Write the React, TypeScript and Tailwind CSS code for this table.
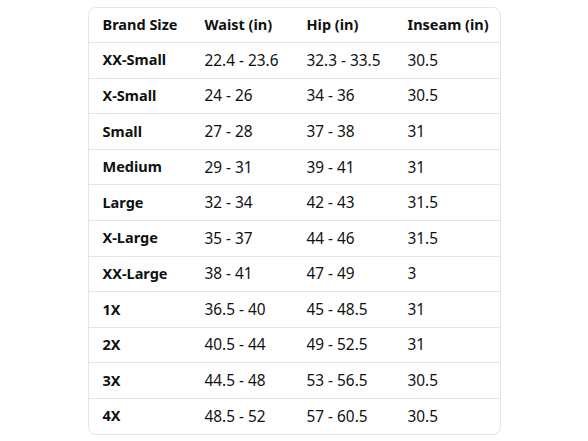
import React from "react";

const header = ["Brand Size", "Waist (in)", "Hip (in)", "Inseam (in)"];
const rows: string[][] = [
  ["XX-Small", "22.4 - 23.6", "32.3 - 33.5", "30.5"],
  ["X-Small", "24 - 26", "34 - 36", "30.5"],
  ["Small", "27 - 28", "37 - 38", "31"],
  ["Medium", "29 - 31", "39 - 41", "31"],
  ["Large", "32 - 34", "42 - 43", "31.5"],
  ["X-Large", "35 - 37", "44 - 46", "31.5"],
  ["XX-Large", "38 - 41", "47 - 49", "3"],
  ["1X", "36.5 - 40", "45 - 48.5", "31"],
  ["2X", "40.5 - 44", "49 - 52.5", "31"],
  ["3X", "44.5 - 48", "53 - 56.5", "30.5"],
  ["4X", "48.5 - 52", "57 - 60.5", "30.5"],
];

function Row({ cells, bold, last }: { cells: string[]; bold?: boolean; last?: boolean }) {
  return (
    <div
      className={`flex-1 grid grid-cols-[102px_102px_101px_1fr] items-center ${last ? "" : "border-b border-[#e3e6e6]"}`}
    >
      {cells.map((c, i) => (
        <div
          key={i}
          className={`pl-[14px] ${bold || i === 0 ? "font-bold text-[14.5px]" : "font-normal text-[15.4px]"}`}
        >
          {c}
        </div>
      ))}
    </div>
  );
}

export default function App() {
  return (
    <div className="w-[588px] h-[441px] bg-white flex items-center justify-center">
      <div
        className="w-[413px] h-[428px] border border-[#e3e6e6] rounded-[8px] flex flex-col text-[#0f1111]"
        style={{ fontFamily: '"Noto Sans", sans-serif' }}
      >
        <Row cells={header} bold />
        {rows.map((r, i) => (
          <Row key={i} cells={r} last={i === rows.length - 1} />
        ))}
      </div>
    </div>
  );
}
